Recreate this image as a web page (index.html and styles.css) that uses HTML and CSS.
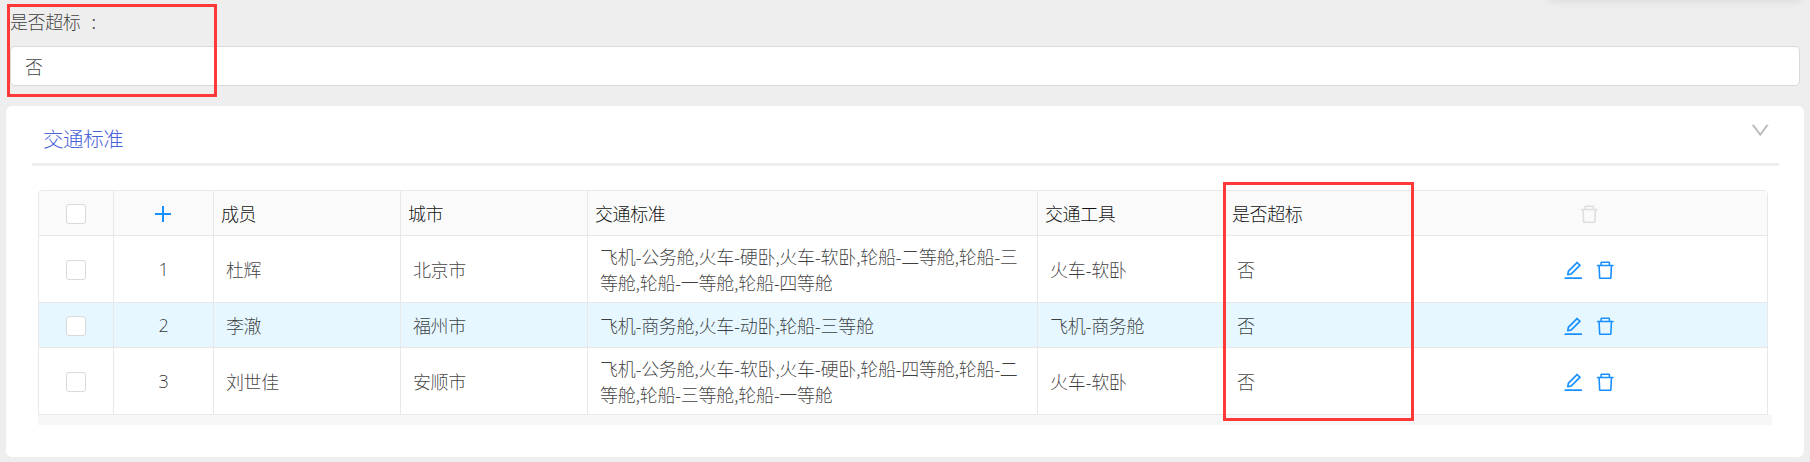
FILE: index.html
```html
<!DOCTYPE html>
<html lang="zh-CN">
<head>
<meta charset="utf-8">
<title>交通标准</title>
<link rel="stylesheet" href="styles.css">
</head>
<body>
<svg class="defs" aria-hidden="true">
  <symbol id="delete" viewBox="0 0 1024 1024"><path d="M360 184h-8c4.400 0 8-3.600 8-8v8h304v-8c0 4.400 3.600 8 8 8h-8v72h72v-80c0-35.300-28.700-64-64-64H352c-35.300 0-64 28.700-64 64v80h72v-72zm504 72H160c-17.700 0-32 14.300-32 32v32c0 4.400 3.600 8 8 8h60.400l24.700 523c1.600 34.100 29.800 61 63.900 61h454c34.200 0 62.300-26.800 63.900-61l24.700-523H888c4.400 0 8-3.600 8-8v-32c0-17.700-14.300-32-32-32zM731.300 840H292.700l-24.200-512h487l-24.200 512z"/></symbol>
  <symbol id="edit" viewBox="0 0 1024 1024"><path d="M257.700 752c2 0 4-.2 6-.5L431.900 722c2-.4 3.900-1.300 5.300-2.800l423.900-423.900a9.960 9.960 0 0 0 0-14.100L694.900 114.900c-1.900-1.900-4.400-2.900-7.100-2.900s-5.200 1-7.100 2.900L256.800 538.800c-1.500 1.500-2.400 3.300-2.800 5.300l-29.500 168.200a33.500 33.500 0 0 0 9.400 29.800c6.600 6.400 14.900 9.900 23.800 9.900zm67.400-174.400L687.800 215l73.300 73.300-362.700 362.600-88.900 15.700 15.600-89zM880 836H144c-17.700 0-32 14.300-32 32v36c0 4.400 3.600 8 8 8h784c4.400 0 8-3.600 8-8v-36c0-17.700-14.300-32-32-32z"/></symbol>
  <symbol id="down" viewBox="0 0 1024 1024"><path d="M884 256h-75c-5.100 0-9.900 2.500-12.900 6.600L512 654.200 227.900 262.600c-3-4.100-7.800-6.600-12.900-6.600h-75c-6.500 0-10.300 7.400-6.500 12.700l352.600 486.100c12.800 17.600 39 17.600 51.700 0l352.600-486.100c3.900-5.300.1-12.700-6.400-12.700z"/></symbol>
</svg>
<div class="top-shadow"></div>
<main class="page">
  <div class="field">
    <label class="label">是否超标<span class="colon">:</span></label>
    <div class="input">否</div>
    <div class="mark mark-field"></div>
  </div>
  <section class="card">
    <header class="card-head">
      <h2 class="title">交通标准</h2>
      <svg class="icon arrow"><use href="#down"/></svg>
    </header>
    <div class="table-wrap">
      <div class="table">
        <div class="row head">
          <div class="cell center"><span class="check"></span></div>
          <div class="cell center"><svg class="plus" viewBox="0 0 16 16"><path d="M7 0h2v7h7v2H9v7H7V9H0V7h7z"/></svg></div>
          <div class="cell">成员</div>
          <div class="cell">城市</div>
          <div class="cell">交通标准</div>
          <div class="cell">交通工具</div>
          <div class="cell">是否超标</div>
          <div class="cell actions disabled"><svg class="icon"><use href="#delete"/></svg></div>
        </div>
        <div class="row tall">
          <div class="cell center"><span class="check"></span></div>
          <div class="cell center num">1</div>
          <div class="cell">杜辉</div>
          <div class="cell">北京市</div>
          <div class="cell standard">飞机-公务舱,火车-硬卧,火车-软卧,轮船-二等舱,轮船-三<br>等舱,轮船-一等舱,轮船-四等舱</div>
          <div class="cell standard">火车-软卧</div>
          <div class="cell">否</div>
          <div class="cell actions"><svg class="icon"><use href="#edit"/></svg><svg class="icon"><use href="#delete"/></svg></div>
        </div>
        <div class="row hover">
          <div class="cell center"><span class="check"></span></div>
          <div class="cell center num">2</div>
          <div class="cell">李澈</div>
          <div class="cell">福州市</div>
          <div class="cell standard">飞机-商务舱,火车-动卧,轮船-三等舱</div>
          <div class="cell standard">飞机-商务舱</div>
          <div class="cell">否</div>
          <div class="cell actions"><svg class="icon"><use href="#edit"/></svg><svg class="icon"><use href="#delete"/></svg></div>
        </div>
        <div class="row tall">
          <div class="cell center"><span class="check"></span></div>
          <div class="cell center num">3</div>
          <div class="cell">刘世佳</div>
          <div class="cell">安顺市</div>
          <div class="cell standard">飞机-公务舱,火车-软卧,火车-硬卧,轮船-四等舱,轮船-二<br>等舱,轮船-三等舱,轮船-一等舱</div>
          <div class="cell standard">火车-软卧</div>
          <div class="cell">否</div>
          <div class="cell actions"><svg class="icon"><use href="#edit"/></svg><svg class="icon"><use href="#delete"/></svg></div>
        </div>
      </div>
      <div class="scrollbar"></div>
      <div class="mark mark-column"></div>
    </div>
  </section>
</main>
</body>
</html>
```
FILE: styles.css
```css
* { box-sizing: border-box; }
body {
  margin: 0;
  height: 462px;
  overflow: hidden;
  background: #eee;
  color: rgba(0, 0, 0, .76);
  font: 300 18px/25.7px "Noto Sans CJK SC", sans-serif;
  letter-spacing: -.4px;
}
.defs { position: absolute; width: 0; height: 0; }
.top-shadow {
  position: absolute;
  top: -10px;
  left: 1548px;
  width: 254px;
  height: 10px;
  box-shadow: 0 1px 8px rgba(0, 0, 0, .09);
}
.page { padding: 0 6px 5px; }
.field { position: relative; height: 106px; padding: 9px 4px 0; }
.label { display: block; height: 37px; }
.colon { margin-left: 11px; }
.input {
  height: 40px;
  padding: 0 14px;
  line-height: 38px;
  background: #fff;
  border: 1px solid #d9d9d9;
  border-radius: 5px;
}
.mark { position: absolute; border: 3px solid #ff3838; pointer-events: none; }
.mark-field { left: 1px; top: 4px; width: 210px; height: 93px; }
.mark-column { left: 1185px; top: -8px; width: 191px; height: 239px; }

.card { height: 351px; padding: 0 25px 0 26px; background: #fff; border-radius: 6px; }
.card-head {
  display: flex;
  justify-content: space-between;
  height: 60px;
  padding: 0 8px 0 11px;
  border-bottom: 3px solid #eee;
}
.title {
  margin: 0;
  font-size: 20.500px;
  font-weight: 300;
  line-height: 65px;
  color: #4a62d8;
}
.icon { width: 22.5px; height: 22.5px; flex: none; fill: currentColor; }
.arrow { margin-top: 13px; color: #b8b8b8; }

.table-wrap { position: relative; margin: 24px 7px 0 6px; }
.table {
  width: 1730px;
  border: 1px solid #e8e8e8;
  border-bottom: 0;
  border-right: 0;
  border-radius: 5px 5px 0 0;
  overflow: hidden;
}
.row {
  display: grid;
  grid-template-columns: 75px 100px 187px 187px 450px 187px 187px 356px;
  height: 45px;
}
.tall { height: 67px; }
.head { background: #fafafa; color: rgba(0, 0, 0, .95); }
.hover { background: #e6f7ff; }
.cell {
  display: flex;
  align-items: center;
  padding: 1px 0 0 12px;
  white-space: nowrap;
  border-right: 1px solid #e8e8e8;
  border-bottom: 1px solid #e8e8e8;
}
.standard { letter-spacing: -.28px; }
.head .cell { padding-left: 7px; }
.row .center { justify-content: center; padding: 1px 1px 0 0; }
.row .num {
  padding: 2px 0 0;
  color: rgba(0, 0, 0, .8);
  font-family: "Open Sans", "Noto Sans", sans-serif;
  font-weight: 300;
}
.row .actions { justify-content: center; gap: 9.500px; padding: 2px 1px 0 0; color: #1890ff; }
.row .disabled { color: #dedede; }
.check { width: 20px; height: 20px; background: #fff; border: 1px solid #d9d9d9; border-radius: 3px; }
.plus { width: 16px; height: 16px; fill: #1890ff; }
.scrollbar { height: 10px; background: #f7f7f7; }
```
